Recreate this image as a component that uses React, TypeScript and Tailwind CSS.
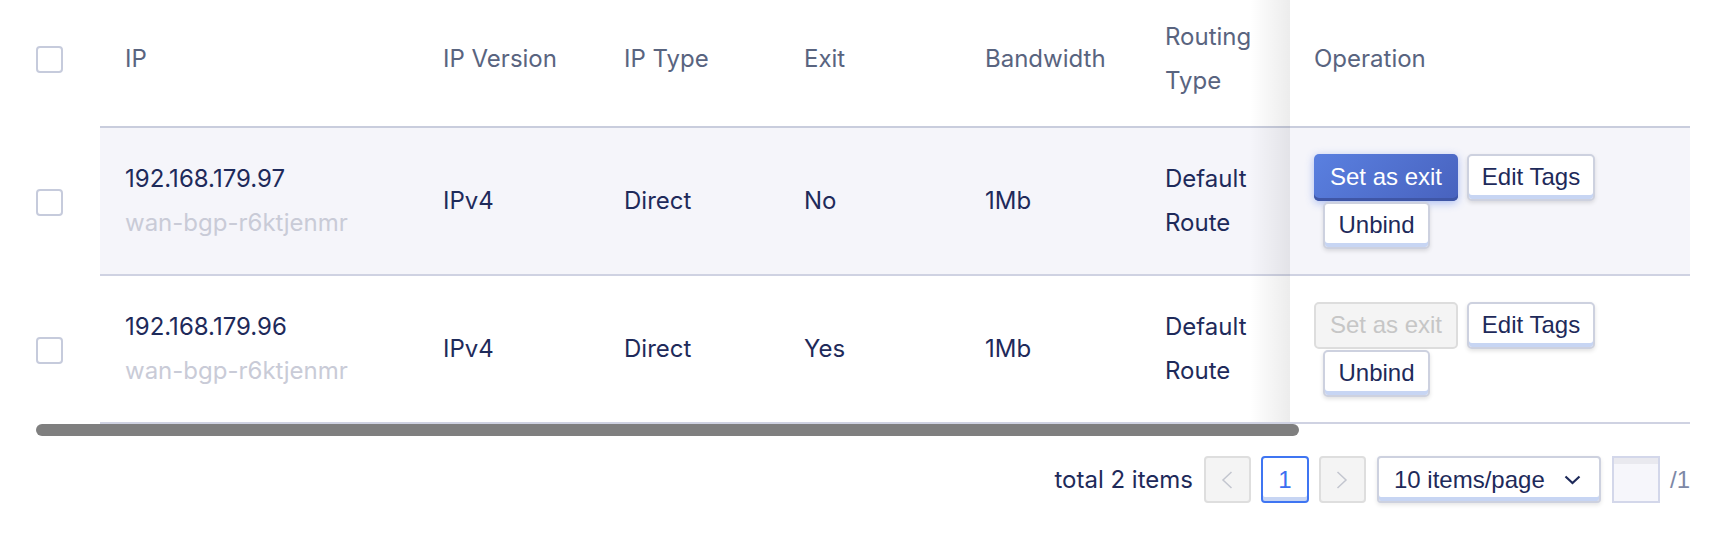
import React from "react";

const C = {
  check: "w-[64px] shrink-0 flex items-center",
  ip: "w-[319px] shrink-0 pl-[25px]",
  ver: "w-[180px] shrink-0 pl-[24px]",
  type: "w-[181px] shrink-0 pl-[25px]",
  exit: "w-[180px] shrink-0 pl-[24px]",
  bw: "w-[180px] shrink-0 pl-[25px]",
  route: "w-[150px] shrink-0 pl-[25px] pr-[24px]",
  op: "w-[400px] shrink-0 pl-[24px]",
};

function Checkbox() {
  return <div className="w-[27px] h-[27px] rounded-[4px] border-2 border-[#c6cbdc] bg-white" />;
}

const btnBase =
  "h-[47px] rounded-[5px] flex items-center justify-center text-[24px] font-['Liberation_Sans',Arial,sans-serif] leading-none";

function PrimaryBtn({ disabled }: { disabled?: boolean }) {
  if (disabled) {
    return (
      <div className={`${btnBase} w-[144px] border-2 border-[#dddddd] bg-[#f4f4f4] text-[#c6c6c6]`}>
        Set as exit
      </div>
    );
  }
  return (
    <div
      className={`${btnBase} w-[144px] text-white bg-[linear-gradient(135deg,#5a80e0,#4862be)] shadow-[inset_0_-3px_0_#3f56a6,0_2px_8px_rgba(80,120,230,0.45)]`}
    >
      Set as exit
    </div>
  );
}

function SecBtn({ label, w }: { label: string; w: string }) {
  return (
    <div
      className={`${btnBase} ${w} ml-[9px] bg-white border-2 border-[#cdd1df] text-[#1e2a5a] shadow-[inset_0_-4px_0_#c7d5f3,0_2px_4px_rgba(0,0,0,0.12)]`}
    >
      {label}
    </div>
  );
}

function Row({
  ip,
  exit,
  disabled,
  shaded,
}: {
  ip: string;
  exit: string;
  disabled?: boolean;
  shaded?: boolean;
}) {
  return (
    <div className="flex h-[148px]">
      <div className={C.check}>
        <Checkbox />
      </div>
      <div
        className={`flex flex-1 border-b-2 border-[#cfd2e2] items-center text-[24px] leading-[44px] text-[#1e2a5a] ${
          shaded ? "bg-[#f5f5fa]" : "bg-white"
        }`}
      >
        <div className={C.ip}>
          <div>{ip}</div>
          <div className="text-[#c9cbd7]">wan-bgp-r6ktjenmr</div>
        </div>
        <div className={C.ver}>IPv4</div>
        <div className={C.type}>Direct</div>
        <div className={C.exit}>{exit}</div>
        <div className={C.bw}>1Mb</div>
        <div className={C.route}>Default Route</div>
        <div className={`${C.op} flex flex-wrap gap-y-[1px]`}>
          <PrimaryBtn disabled={disabled} />
          <SecBtn label="Edit Tags" w="w-[128px]" />
          <SecBtn label="Unbind" w="w-[107px]" />
        </div>
      </div>
    </div>
  );
}

function Chevron({ dir }: { dir: "l" | "r" }) {
  return (
    <svg width="12" height="18" viewBox="0 0 12 18" fill="none">
      <path
        d={dir === "l" ? "M10.5 1 L2 9 L10.5 17" : "M1.5 1 L10 9 L1.5 17"}
        stroke="#c3c6cf"
        strokeWidth="1.5"
      />
    </svg>
  );
}

export default function App() {
  return (
    <div className="w-[1734px] h-[534px] bg-white overflow-hidden font-['Inter',sans-serif]">
      <div className="relative ml-[36px] w-[1654px]">
        {/* header */}
        <div className="flex h-[128px]">
          <div className={`${C.check} pb-[10px]`}>
            <Checkbox />
          </div>
          <div className="flex flex-1 items-center border-b-2 border-[#c9cddd] pb-[8px] text-[24px] leading-[44px] text-[#59647f]">
            <div className={C.ip}>IP</div>
            <div className={C.ver}>IP Version</div>
            <div className={C.type}>IP Type</div>
            <div className={C.exit}>Exit</div>
            <div className={C.bw}>Bandwidth</div>
            <div className={C.route}>Routing Type</div>
            <div className={C.op}>Operation</div>
          </div>
        </div>
        <Row ip="192.168.179.97" exit="No" shaded />
        <Row ip="192.168.179.96" exit="Yes" disabled />
        {/* fixed column shadow */}
        <div className="absolute top-0 left-[1214px] w-[40px] h-[422px] pointer-events-none bg-[linear-gradient(to_right,rgba(0,0,0,0),rgba(0,0,0,0.075))]" />
        {/* scrollbar */}
        <div className="h-[12px] w-[1263px] rounded-full bg-[#7f7f7f]" />
      </div>

      {/* pagination */}
      <div className="mt-[20px] pr-[44px] flex justify-end items-center gap-x-[10px] h-[47px]">
        <div className="text-[24px] text-[#1e2a5a] mr-[1px]">total 2 items</div>
        <div className="w-[47px] h-[47px] rounded-[4px] border-2 border-[#dedede] bg-[#f4f4f4] flex items-center justify-center">
          <Chevron dir="l" />
        </div>
        <div className="w-[48px] h-[47px] rounded-[4px] border-2 border-[#3f75f2] bg-white shadow-[inset_0_-4px_0_#c7d5f3] flex items-center justify-center text-[24px] text-[#3b6ef0] font-['Liberation_Sans',Arial,sans-serif]">
          1
        </div>
        <div className="w-[47px] h-[47px] rounded-[4px] border-2 border-[#dedede] bg-[#f4f4f4] flex items-center justify-center">
          <Chevron dir="r" />
        </div>
        <div className="w-[224px] h-[47px] ml-[1px] rounded-[4px] border-2 border-[#cdd1df] bg-white shadow-[inset_0_-4px_0_#c7d5f3,0_2px_4px_rgba(0,0,0,0.1)] flex items-center justify-between pl-[15px] pr-[18px] text-[24px] text-[#1e2a5a] font-['Liberation_Sans',Arial,sans-serif]">
          <span>10 items/page</span>
          <svg width="17" height="10" viewBox="0 0 17 10" fill="none">
            <path d="M1.5 1.5 L8.5 8 L15.5 1.5" stroke="#1e2a5a" strokeWidth="2.2" />
          </svg>
        </div>
        <div className="w-[48px] h-[47px] ml-[1px] border-2 border-[#d3d7ea] bg-[#f6f6fb] shadow-[inset_0_6px_0_#e9e9ef]" />
        <div className="text-[24px] text-[#7d88a6] font-['Liberation_Sans',Arial,sans-serif]">/1</div>
      </div>
    </div>
  );
}
